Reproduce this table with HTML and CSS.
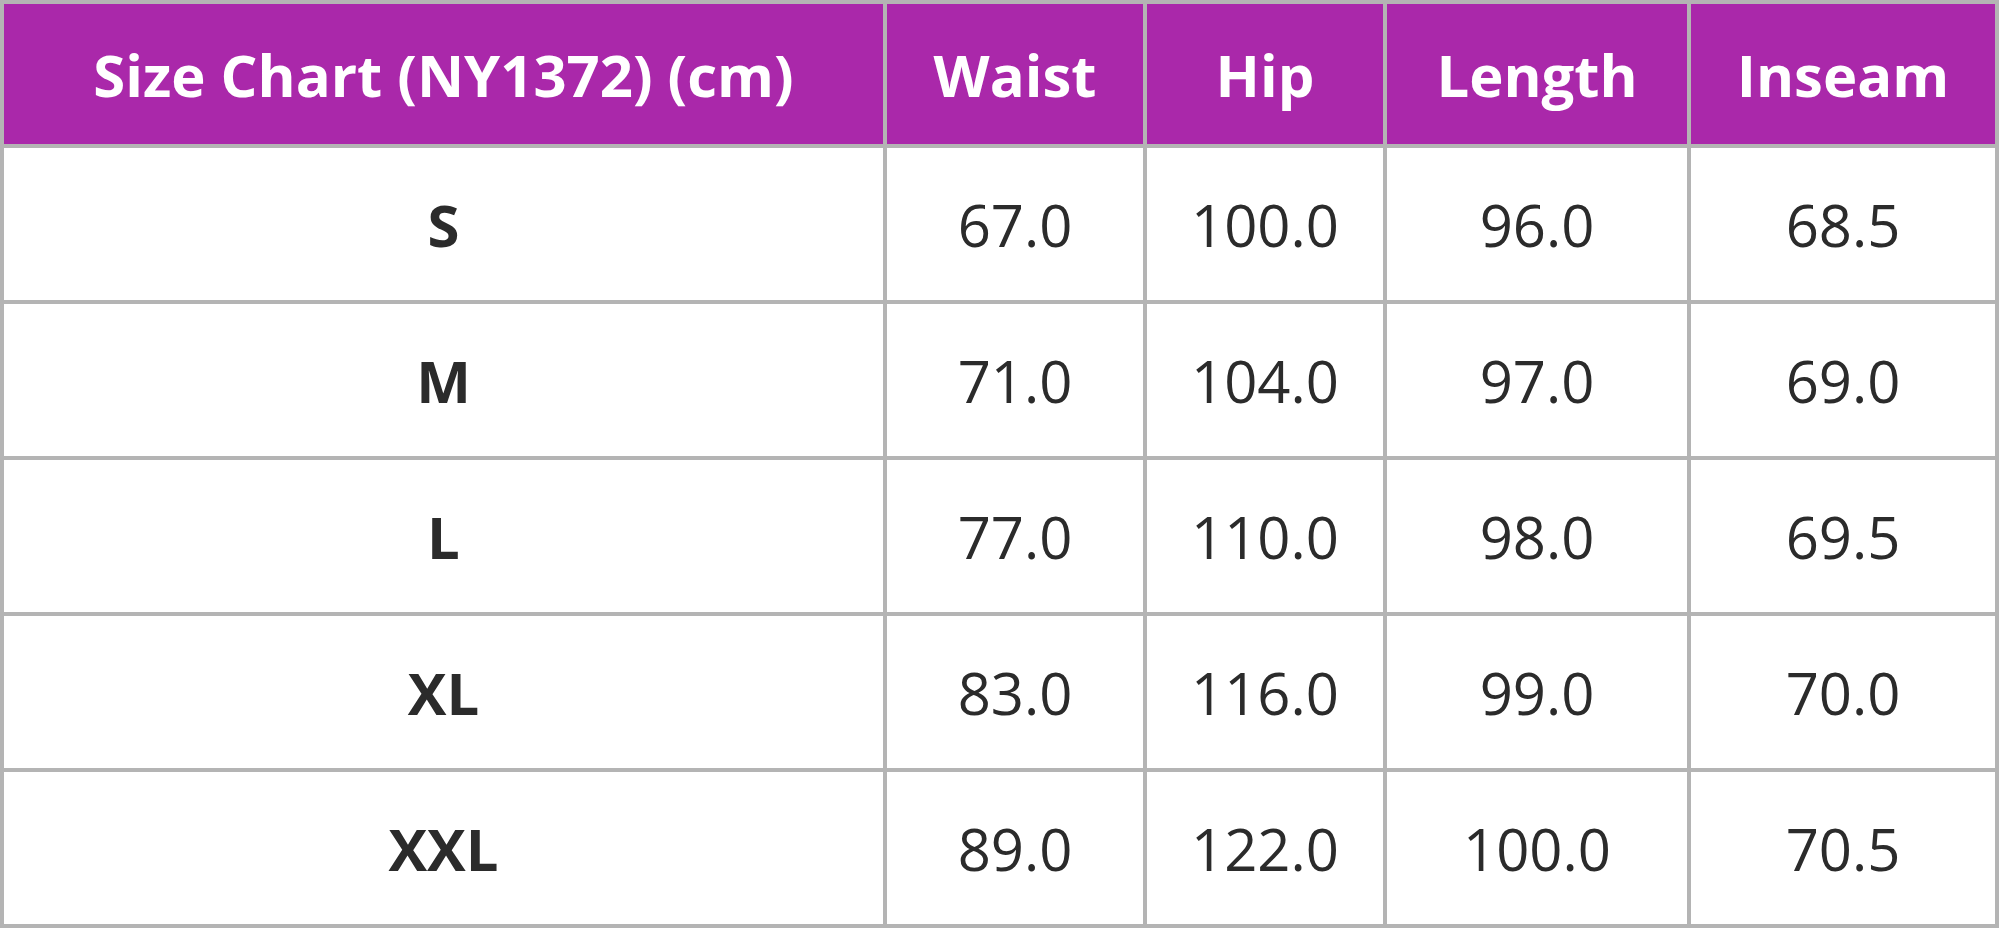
FILE: index.html
```html
<!DOCTYPE html>
<html lang="en">
<head>
<meta charset="utf-8">
<title>Size Chart (NY1372)</title>
<link rel="stylesheet" href="styles.css">
</head>
<body>
<div class="chart" role="table">
  <div class="cell head" role="columnheader">Size Chart (NY1372) (cm)</div>
  <div class="cell head" role="columnheader">Waist</div>
  <div class="cell head" role="columnheader">Hip</div>
  <div class="cell head" role="columnheader">Length</div>
  <div class="cell head" role="columnheader">Inseam</div>

  <div class="cell size" role="rowheader">S</div>
  <div class="cell" role="cell">67.0</div>
  <div class="cell" role="cell">100.0</div>
  <div class="cell" role="cell">96.0</div>
  <div class="cell" role="cell">68.5</div>

  <div class="cell size" role="rowheader">M</div>
  <div class="cell" role="cell">71.0</div>
  <div class="cell" role="cell">104.0</div>
  <div class="cell" role="cell">97.0</div>
  <div class="cell" role="cell">69.0</div>

  <div class="cell size" role="rowheader">L</div>
  <div class="cell" role="cell">77.0</div>
  <div class="cell" role="cell">110.0</div>
  <div class="cell" role="cell">98.0</div>
  <div class="cell" role="cell">69.5</div>

  <div class="cell size" role="rowheader">XL</div>
  <div class="cell" role="cell">83.0</div>
  <div class="cell" role="cell">116.0</div>
  <div class="cell" role="cell">99.0</div>
  <div class="cell" role="cell">70.0</div>

  <div class="cell size" role="rowheader">XXL</div>
  <div class="cell" role="cell">89.0</div>
  <div class="cell" role="cell">122.0</div>
  <div class="cell" role="cell">100.0</div>
  <div class="cell" role="cell">70.5</div>
</div>
</body>
</html>
```
FILE: styles.css
```css
html, body {
  margin: 0;
  padding: 0;
  background: #ffffff;
}

.chart {
  display: grid;
  grid-template-columns: 879px 256px 236px 300px 304px;
  grid-template-rows: 140px repeat(5, 152px);
  gap: 4px;
  padding: 4px;
  width: 1999px;
  height: 928px;
  box-sizing: border-box;
  background: #b4b4b4;
  font-family: "Open Sans", "Noto Sans", sans-serif;
}

.cell {
  display: flex;
  align-items: center;
  justify-content: center;
  background: #ffffff;
  color: #2b2b2b;
  font-size: 58px;
  font-weight: 400;
  white-space: nowrap;
}

.head {
  background: #aa28aa;
  color: #ffffff;
  font-weight: 700;
  font-size: 58px;
}

.size {
  font-weight: 700;
}
```
